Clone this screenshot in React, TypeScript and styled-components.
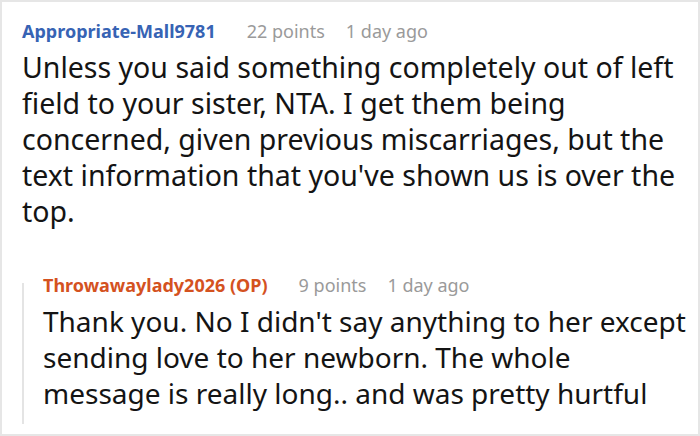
import styled, { createGlobalStyle } from "styled-components";

const Global = createGlobalStyle`
  html, body {
    margin: 0;
    padding: 0;
    background: #fff;
  }
`;

const Frame = styled.div`
  width: 700px;
  height: 436px;
  box-sizing: border-box;
  border: 2px solid #e6e6e6;
  overflow: hidden;
  padding: 12px 4px 0 20px;
  font-family: "Noto Sans", "Open Sans", sans-serif;
`;

const Comment = styled.div<{ nested?: boolean }>`
  margin-top: ${({ nested }) => (nested ? "39px" : "0")};
  padding: ${({ nested }) => (nested ? "0 0 13px 21px" : "0")};
  background: ${({ nested }) =>
    nested
      ? "linear-gradient(#e4e4e4, #e4e4e4) no-repeat 0 15px / 2px calc(100% - 15px)"
      : "none"};
`;

const Meta = styled.div`
  display: flex;
  align-items: baseline;
  line-height: 34px;
  font-size: 18px;
  margin-bottom: 1px;
`;

const Author = styled.span<{ op?: boolean }>`
  font-weight: 700;
  color: ${({ op }) => (op ? "#d4521f" : "#3763b4")};
  margin-right: 31px;
`;

const Info = styled.span`
  color: #9a9a9a;
  margin-right: 21px;
`;

const Body = styled.p<{ size: number }>`
  margin: 0;
  font-size: ${({ size }) => size}px;
  line-height: 36px;
  color: #141414;
`;

export default function App() {
  return (
    <>
      <Global />
      <Frame>
        <Comment>
          <Meta>
            <Author>Appropriate-Mall9781</Author>
            <Info>22 points</Info>
            <Info>1 day ago</Info>
          </Meta>
          <Body size={28.5}>
            Unless you said something completely out of left field to your
            sister, NTA. I get them being concerned, given previous
            miscarriages, but the text information that you've shown us is over
            the top.
          </Body>
        </Comment>
        <Comment nested>
          <Meta>
            <Author op>Throwawaylady2026 (OP)</Author>
            <Info>9 points</Info>
            <Info>1 day ago</Info>
          </Meta>
          <Body size={28}>
            Thank you. No I didn't say anything to her except sending love to
            her newborn. The whole message is really long.. and was pretty
            hurtful
          </Body>
        </Comment>
      </Frame>
    </>
  );
}
